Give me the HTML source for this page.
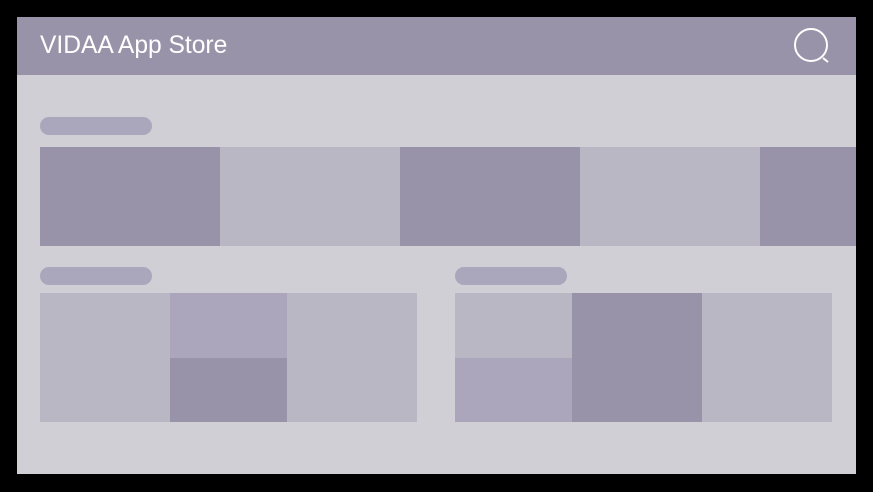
<!DOCTYPE html><html><head><style>
body{margin:0;width:873px;height:492px;background:#000;position:relative;overflow:hidden;font-family:"Liberation Sans",sans-serif}
div{position:absolute}
.L{background:#bab7c4}.D{background:#9893a8}.M{background:#aba6bc}
.p{background:#aaa6bb;border-radius:9px;height:18px;width:112px}
</style></head><body>
<div style="left:17px;top:17px;width:839px;height:457px;background:#d0cfd5;overflow:hidden">
<div class="D" style="left:0;top:0;width:839px;height:58px"></div>
<div style="left:23px;top:14px;color:#fff;font-size:24.6px;line-height:30px">VIDAA App Store</div>
<svg style="position:absolute;left:770px;top:8px" width="50" height="50"><circle cx="24" cy="20" r="16" fill="none" stroke="#fff" stroke-width="2"/><line x1="36" y1="33" x2="41" y2="37" stroke="#fff" stroke-width="2"/></svg>
</div>
<div class="p" style="left:40px;top:117px"></div>
<div class="D" style="left:40px;top:147px;width:180px;height:99px"></div>
<div class="L" style="left:220px;top:147px;width:180px;height:99px"></div>
<div class="D" style="left:400px;top:147px;width:180px;height:99px"></div>
<div class="L" style="left:580px;top:147px;width:180px;height:99px"></div>
<div class="D" style="left:760px;top:147px;width:96px;height:99px"></div>
<div class="p" style="left:40px;top:267px"></div>
<div class="p" style="left:455px;top:267px"></div>
<div class="L" style="left:40px;top:293px;width:130px;height:129px"></div>
<div class="M" style="left:170px;top:293px;width:117px;height:65px"></div>
<div class="D" style="left:170px;top:358px;width:117px;height:64px"></div>
<div class="L" style="left:287px;top:293px;width:130px;height:129px"></div>
<div class="L" style="left:455px;top:293px;width:117px;height:65px"></div>
<div class="M" style="left:455px;top:358px;width:117px;height:64px"></div>
<div class="D" style="left:572px;top:293px;width:130px;height:129px"></div>
<div class="L" style="left:702px;top:293px;width:130px;height:129px"></div>
</body></html>
